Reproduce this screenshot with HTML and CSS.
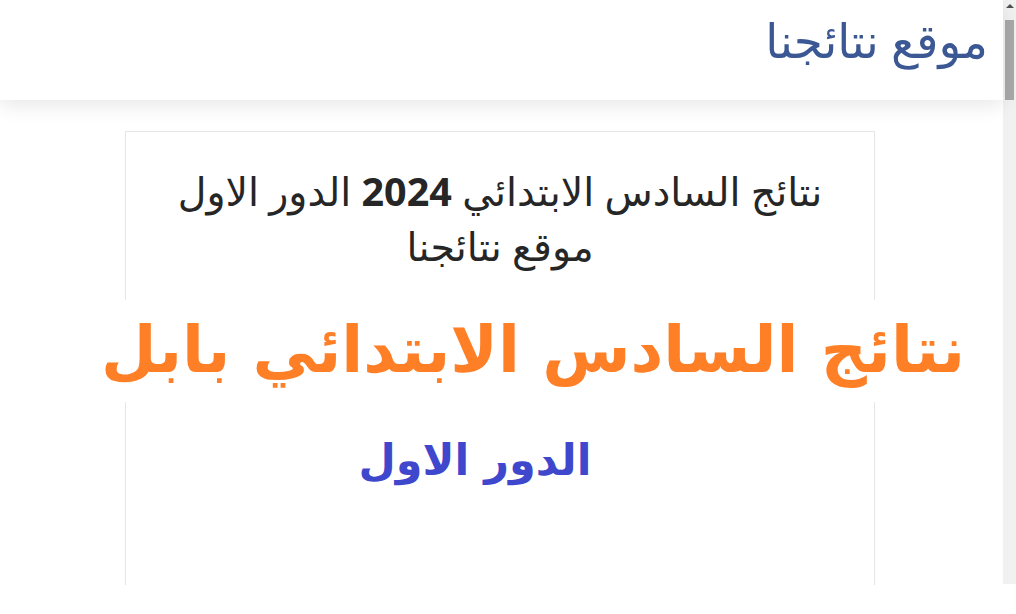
FILE: index.html
```html
<!DOCTYPE html>
<html lang="ar" dir="rtl">
<head>
<meta charset="utf-8">
<title>موقع نتائجنا</title>
<link rel="stylesheet" href="styles.css">
</head>
<body>
<div class="page">
  <header class="site-header">
    <h1 class="brand">موقع نتائجنا</h1>
  </header>
  <main class="content">
    <article class="card">
      <h2 class="post-title">نتائج السادس الابتدائي <strong>2024</strong> الدور الاول<br>موقع نتائجنا</h2>
      <div class="banner banner-orange">نتائج السادس الابتدائي بابل</div>
      <div class="banner banner-blue">الدور الاول</div>
    </article>
  </main>
</div>
<div class="scrollbar" aria-hidden="true">
  <span class="scroll-arrow"></span>
  <span class="scroll-thumb"></span>
</div>
</body>
</html>
```

FILE: styles.css
```css
html, body {
  margin: 0;
  padding: 0;
  background: #fff;
  height: 100%;
  overflow: hidden;
}
body {
  font-family: "Noto Sans", "DejaVu Sans", sans-serif;
  color: #222;
}
.page {
  margin-right: 13px;
  height: 585px;
  display: flex;
  flex-direction: column;
}
.site-header {
  height: 100px;
  background: #fff;
  box-shadow: 0 6px 18px rgba(0, 0, 0, 0.09);
  display: flex;
  align-items: center;
  padding: 0 15px;
  position: relative;
  z-index: 1;
}
.brand {
  margin: 0 0 20px;
  font-size: 47px;
  font-weight: 400;
  color: #3b5894;
  line-height: 1;
  white-space: nowrap;
}
.content {
  flex: 1;
  display: flex;
  justify-content: center;
  padding-top: 31px;
  padding-right: 3px;
  min-height: 0;
}
.card {
  width: 748px;
  border: 1px solid #e6e6e6;
  border-bottom: none;
  display: flex;
  flex-direction: column;
  align-items: center;
}
.post-title {
  margin: 32px 0 0;
  font-size: 39.5px;
  font-weight: 400;
  line-height: 55px;
  text-align: center;
  color: #262626;
  white-space: nowrap;
}
.post-title strong {
  font-weight: 700;
}
.banner {
  background: #fff;
  text-align: center;
  font-family: "DejaVu Sans", sans-serif;
  font-weight: 700;
  white-space: nowrap;
}
.banner-orange {
  margin-top: 26px;
  width: 870px;
  margin-right: -96px;
  margin-left: -30px;
  height: 102px;
  line-height: 100px;
  font-size: 64px;
  color: #ff7f27;
}
.banner-blue {
  margin-top: 28px;
  margin-right: 50px;
  font-size: 43px;
  line-height: 60px;
  color: #3f48cc;
}
.scrollbar {
  position: fixed;
  top: 0;
  right: 0;
  width: 13px;
  height: 584px;
  background: #f1f1f1;
}
.scroll-arrow {
  position: absolute;
  top: 4px;
  left: 3px;
  width: 0;
  height: 0;
  border-left: 4px solid transparent;
  border-right: 4px solid transparent;
  border-bottom: 4px solid #505050;
}
.scroll-thumb {
  position: absolute;
  top: 20px;
  left: 2px;
  width: 9px;
  height: 80px;
  background: #a8a8a8;
}
```
